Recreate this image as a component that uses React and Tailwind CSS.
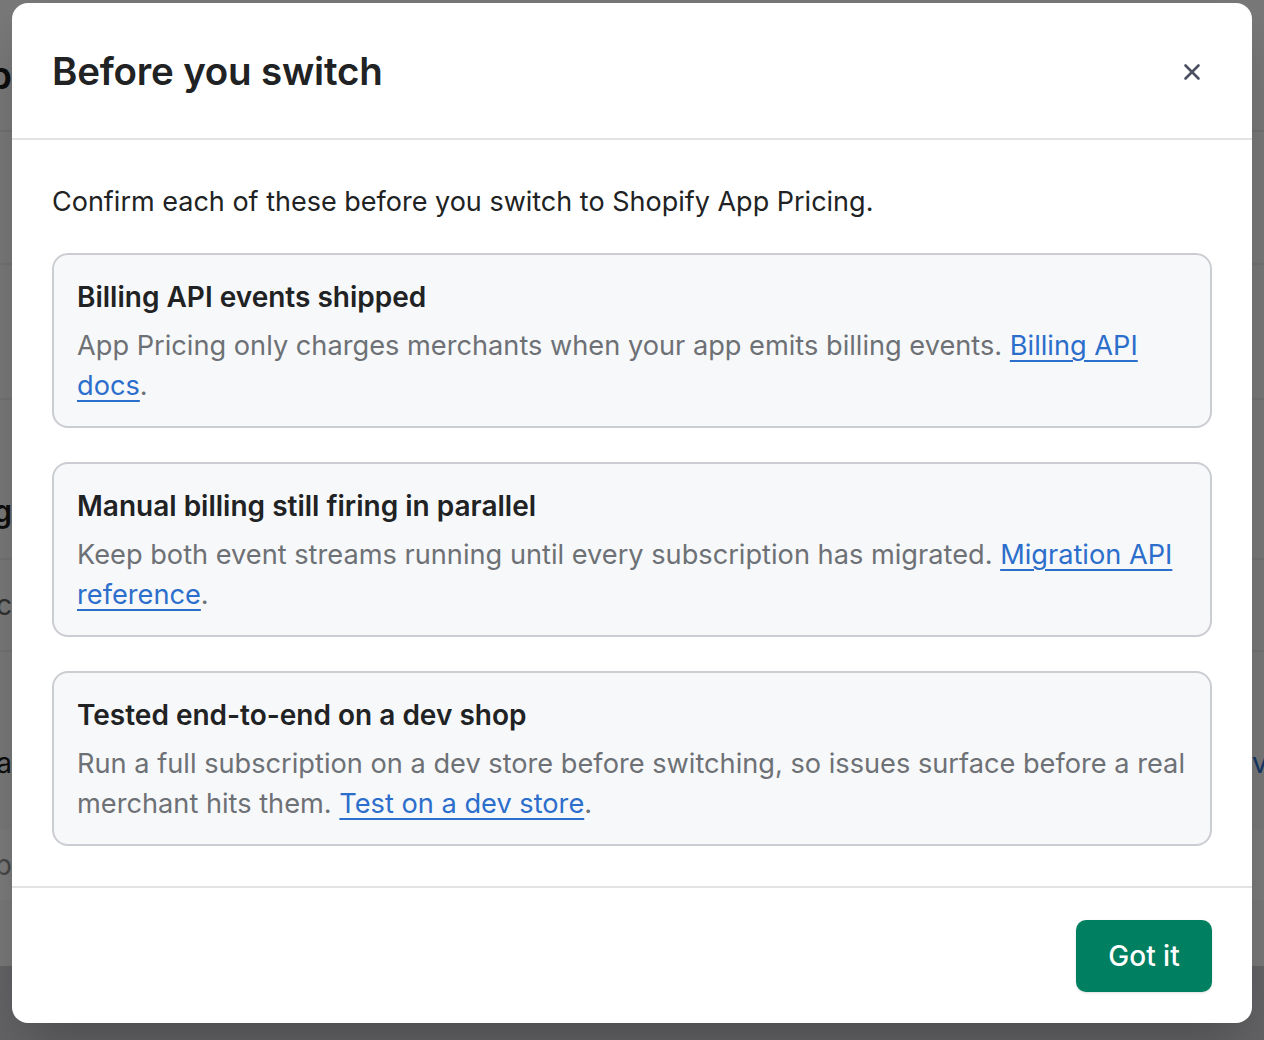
import { X } from "lucide-react";

const font = { fontFamily: "Inter, 'Noto Sans', sans-serif" };

const checks = [
  {
    title: "Billing API events shipped",
    body: "App Pricing only charges merchants when your app emits billing events.",
    link: "Billing API docs",
  },
  {
    title: "Manual billing still firing in parallel",
    body: "Keep both event streams running until every subscription has migrated.",
    link: "Migration API reference",
  },
  {
    title: "Tested end-to-end on a dev shop",
    body: "Run a full subscription on a dev store before switching, so issues surface before a real merchant hits them.",
    link: "Test on a dev store",
  },
];

function Edge({ text, className }) {
  return (
    <div className="flex w-[12px] justify-end overflow-hidden whitespace-nowrap">
      <span className={className}>{text}</span>
    </div>
  );
}

function BackgroundPage() {
  return (
    <div className="flex h-[1040px] flex-col bg-[#f0f0f0]">
      <div className="flex h-[132px] items-center border-b-2 border-[#e0e0e0] pt-[20px]">
        <Edge text="App" className="text-[38px] font-semibold text-[#1a1a1a]" />
      </div>
      <div className="h-[133px] border-b-2 border-[#e4e4e4]" />
      <div className="h-[135px] border-b-2 border-[#e4e4e4]" />
      <div className="flex h-[160px] items-center border-b-2 border-[#e4e4e4] pt-[64px]">
        <Edge text="Billing" className="text-[30px] font-semibold text-[#1a1a1a]" />
      </div>
      <div className="flex h-[92px] items-center border-b-2 border-[#e4e4e4]">
        <Edge text="Sync" className="text-[28px] text-[#616161]" />
      </div>
      <div className="flex h-[178px] items-center justify-between pt-[44px]">
        <Edge text="Data" className="text-[28px] text-[#1a1a1a]" />
        <div className="flex w-[12px] justify-start overflow-hidden whitespace-nowrap">
          <span className="text-[28px] text-[#2c6ecb]">view</span>
        </div>
      </div>
      <div className="flex h-[70px] items-center bg-[#f7f7f7]">
        <Edge text="Setup" className="text-[28px] text-[#8a8a8a]" />
      </div>
      <div className="h-[66px]" />
      <div className="flex-1 bg-[#c6c7cc]" />
    </div>
  );
}

export default function App() {
  return (
    <div className="relative h-[1040px] w-[1264px] overflow-hidden" style={font}>
      <BackgroundPage />
      <div className="absolute inset-0 bg-black/50" />
      <div className="absolute left-[12px] top-[3px] flex w-[1240px] flex-col overflow-hidden rounded-2xl bg-white shadow-2xl">
        <div className="flex h-[137px] items-center justify-between border-b-2 border-[#e3e3e3] px-10 pt-[2px]">
          <h1 className="text-[38.5px] font-semibold tracking-[-0.2px] text-[#202223]">Before you switch</h1>
          <button className="flex h-10 w-10 items-center justify-center text-[#4a5160]">
            <X size={26} strokeWidth={2.4} />
          </button>
        </div>
        <div className="flex flex-col px-10 pb-10 pt-[42px]">
          <p className="text-[27px] leading-[40px] text-[#202223]">
            Confirm each of these before you switch to Shopify App Pricing.
          </p>
          <div className="mt-[31px] flex flex-col gap-[34px]">
            {checks.map((c) => (
              <div
                key={c.title}
                className="rounded-2xl border-2 border-[#cbcdd2] bg-[#f7f8fa] px-[23px] pb-[20px] pt-[24px]"
              >
                <h2 className="text-[28px] font-semibold leading-[36px] text-[#202223]">{c.title}</h2>
                <p className="mt-[11px] text-[27.2px] leading-[40px] text-[#6d7175]">
                  {c.body}{" "}
                  <a href="#" className="text-[#2c6ecb] underline underline-offset-[5px] decoration-2">
                    {c.link}
                  </a>
                  .
                </p>
              </div>
            ))}
          </div>
        </div>
        <div className="flex h-[137px] items-center justify-end border-t-2 border-[#e3e3e3] px-10">
          <button className="h-[72px] w-[136px] rounded-[10px] bg-[#008060] text-[28px] font-medium text-white shadow-sm">
            Got it
          </button>
        </div>
      </div>
    </div>
  );
}
